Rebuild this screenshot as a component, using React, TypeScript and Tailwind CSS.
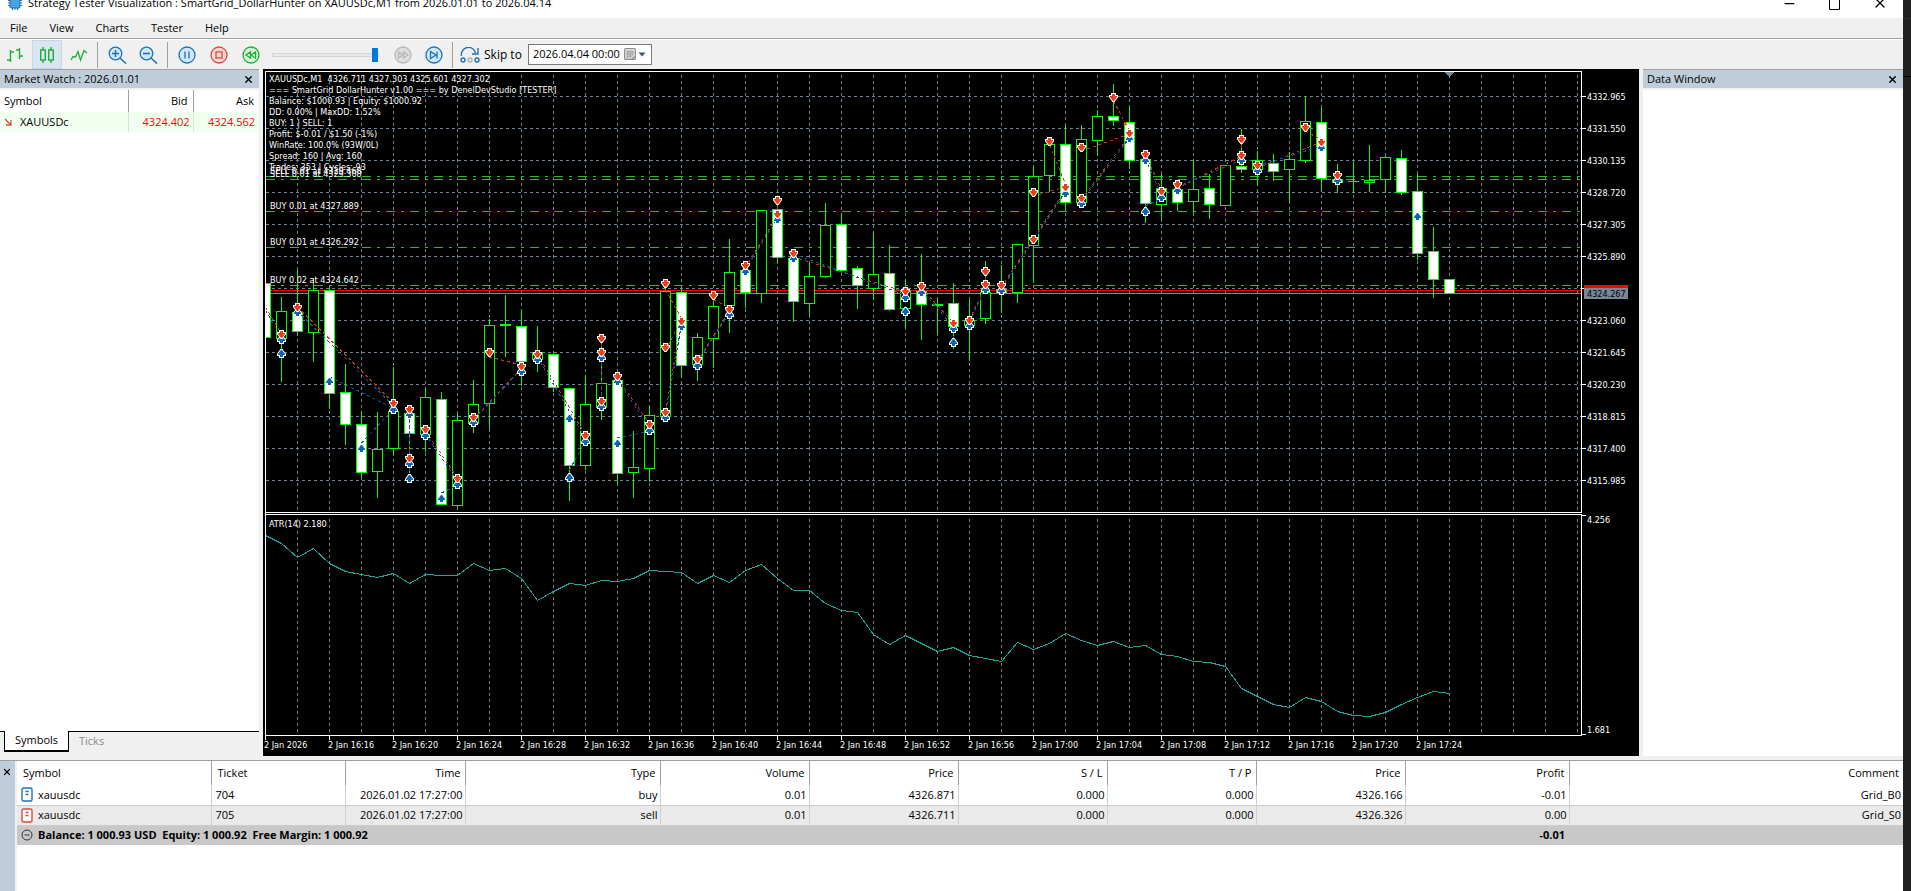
import type { ReactNode } from 'react'
import { X, Minus } from 'lucide-react'

type Candle = [number, number, number, number, 0 | 1]

// high, body top, body bottom, low, filled
const candles: Candle[] = [
  [283, 283, 337, 337, 1], [297, 311, 338, 382, 0], [270, 312, 331, 336, 1], [278, 290, 332, 362, 0],
  [287, 290, 393, 409, 1], [364, 392, 424, 445, 1], [411, 424, 472, 478, 1], [412, 449, 471, 498, 0],
  [367, 411, 448, 455, 0], [405, 413, 433, 473, 1], [388, 397, 434, 452, 0], [392, 399, 504, 504, 1],
  [413, 420, 505, 507, 0], [380, 404, 423, 433, 0], [319, 325, 403, 429, 0], [295, 324, 325, 357, 0],
  [311, 326, 361, 386, 1], [326, 353, 359, 372, 0], [353, 354, 387, 392, 1], [388, 388, 465, 501, 1],
  [375, 404, 465, 470, 0], [337, 383, 407, 420, 0], [378, 380, 473, 484, 1], [431, 467, 472, 498, 0],
  [406, 415, 468, 482, 0], [285, 291, 416, 421, 0], [287, 292, 365, 378, 1], [333, 337, 364, 381, 0],
  [297, 306, 338, 368, 0], [239, 272, 305, 333, 0], [263, 270, 292, 308, 1], [210, 210, 293, 303, 0],
  [200, 209, 257, 263, 1], [258, 258, 301, 322, 1], [263, 276, 303, 315, 0], [203, 225, 276, 278, 0],
  [213, 224, 270, 273, 1], [266, 268, 285, 309, 1], [233, 274, 288, 300, 0], [245, 273, 309, 311, 1],
  [280, 290, 308, 328, 0], [254, 291, 304, 340, 1], [298, 304, 305, 334, 0], [283, 303, 326, 349, 1],
  [300, 320, 325, 361, 0], [261, 292, 318, 324, 0], [265, 289, 292, 313, 0], [244, 244, 292, 303, 0],
  [167, 176, 245, 283, 0], [144, 144, 175, 192, 0], [125, 144, 202, 211, 1], [125, 139, 202, 203, 0],
  [110, 116, 140, 156, 0], [84, 116, 120, 126, 1], [107, 122, 160, 169, 1], [155, 159, 203, 223, 1],
  [174, 188, 204, 219, 0], [183, 189, 202, 211, 1], [160, 189, 201, 213, 0], [174, 188, 204, 219, 1],
  [165, 165, 205, 205, 0], [129, 166, 169, 173, 1], [151, 160, 169, 186, 0], [154, 163, 171, 181, 1],
  [152, 159, 169, 202, 0], [96, 121, 160, 163, 0], [108, 122, 178, 191, 1], [164, 179, 182, 193, 0],
  [162, 181, 181, 193, 0], [145, 180, 182, 192, 0], [156, 157, 179, 193, 0], [150, 158, 192, 195, 1],
  [174, 191, 253, 260, 1], [227, 251, 279, 298, 1], [279, 279, 293, 293, 1],
]

// [bar, y]
const sells = [
  [1, 334], [2, 307], [8, 403], [9, 409], [9, 458], [10, 429], [12, 478], [13, 417], [14, 352], [16, 366],
  [17, 354], [20, 435], [21, 338], [21, 352], [21, 401], [22, 376], [24, 424], [25, 283], [25, 347], [25, 412],
  [26, 321], [27, 359], [28, 295], [29, 309], [30, 265], [32, 200], [32, 214], [33, 253], [40, 291], [41, 286],
  [43, 323], [44, 320], [45, 271], [45, 284], [46, 285], [48, 192], [48, 239], [49, 141], [50, 187], [51, 147],
  [51, 198], [53, 97], [54, 133], [55, 154], [56, 191], [57, 184], [61, 139], [61, 155], [62, 165], [65, 127],
  [66, 142], [67, 175],
]

const buys = [
  [1, 339], [1, 353], [2, 312], [4, 381], [6, 448], [8, 409], [9, 414], [9, 463], [9, 478], [10, 435],
  [11, 498], [12, 484], [13, 422], [16, 371], [17, 359], [19, 418], [19, 477], [20, 441], [21, 357], [21, 406],
  [22, 381], [22, 443], [24, 430], [25, 417], [26, 326], [27, 365], [29, 314], [30, 271], [32, 219], [33, 258],
  [40, 297], [40, 311], [41, 292], [43, 328], [43, 342], [44, 325], [45, 289], [46, 290], [50, 193], [51, 203],
  [54, 138], [55, 160], [55, 211], [56, 197], [57, 190], [61, 160], [62, 170], [66, 147], [67, 180], [72, 216],
]

// [from bar, from y, to bar, to y]
const sellTrades = [
  [0, 307, 1, 334], [2, 307, 8, 403], [9, 413, 9, 458], [10, 431, 12, 478], [13, 419, 16, 368], [14, 357, 16, 365],
  [17, 354, 20, 435], [21, 338, 21, 401], [22, 378, 24, 424], [25, 412, 26, 321], [25, 290, 26, 318], [25, 350, 26, 320],
  [27, 361, 29, 311], [28, 300, 29, 307], [30, 267, 32, 216], [32, 200, 32, 214], [33, 257, 40, 292], [41, 288, 43, 323],
  [44, 320, 45, 286], [45, 271, 45, 284], [46, 287, 50, 190], [48, 196, 50, 187], [49, 145, 50, 184], [51, 151, 54, 134],
  [51, 199, 54, 136], [53, 101, 54, 131], [55, 156, 56, 189], [57, 188, 61, 156], [61, 139, 61, 155], [62, 168, 66, 142],
  [65, 131, 66, 140],
]

const buyTrades = [
  [0, 310, 1, 339], [2, 311, 8, 406], [4, 377, 8, 408], [6, 443, 8, 409], [9, 414, 9, 478], [10, 434, 12, 481],
  [11, 493, 12, 485], [13, 420, 16, 369], [17, 357, 20, 439], [19, 470, 20, 441], [21, 357, 21, 406], [22, 380, 24, 428],
  [22, 438, 24, 431], [25, 416, 26, 325], [27, 362, 29, 313], [30, 269, 32, 218], [33, 254, 40, 295], [41, 290, 43, 327],
  [44, 322, 45, 288], [46, 289, 50, 192], [51, 201, 54, 138], [55, 159, 56, 195], [55, 206, 56, 198], [57, 187, 61, 160],
  [62, 166, 66, 146], [40, 300, 40, 309], [43, 330, 43, 340],
]

const atr = [
  535, 543, 557, 548, 563, 571, 574, 577, 573, 583, 574, 575, 575, 563, 570, 568, 578, 600, 591, 583, 585, 580, 581,
  578, 570, 571, 572, 583, 575, 582, 570, 564, 578, 590, 590, 603, 610, 612, 634, 644, 635, 643, 651, 647, 655, 658,
  661, 642, 649, 643, 633, 640, 645, 641, 647, 645, 654, 656, 661, 662, 666, 688, 696, 704, 707, 697, 701, 711, 715,
  716, 712, 704, 697, 691, 693,
]

const times = [
  '2 Jan 2026', '2 Jan 16:16', '2 Jan 16:20', '2 Jan 16:24', '2 Jan 16:28', '2 Jan 16:32', '2 Jan 16:36',
  '2 Jan 16:40', '2 Jan 16:44', '2 Jan 16:48', '2 Jan 16:52', '2 Jan 16:56', '2 Jan 17:00', '2 Jan 17:04',
  '2 Jan 17:08', '2 Jan 17:12', '2 Jan 17:16', '2 Jan 17:20', '2 Jan 17:24',
]

const prices = [
  '4332.965', '4331.550', '4330.135', '4328.720', '4327.305', '4325.890', '', '4323.060', '4321.645', '4320.230',
  '4318.815', '4317.400', '4315.985',
]

const info = [
  'XAUUSDc,M1\u00a0 4326.711 4327.303 4325.601 4327.302',
  '=== SmartGrid DollarHunter v1.00 === by DenelDevStudio [TESTER]',
  'Balance: $1000.93 | Equity: $1000.92',
  'DD: 0.00% | MaxDD: 1.52%',
  'BUY: 1 | SELL: 1',
  'Profit: $-0.01 / $1.50 (-1%)',
  'WinRate: 100.0% (93W/0L)',
  'Spread: 160 | Avg: 160',
  'Trades: 353 | Cycles: 93',
]

const orders = [
  { y: 176, label: 'SELL 0.01 at 4329.468' },
  { y: 179, label: 'SELL 0.01 at 4329.308' },
  { y: 211, label: 'BUY 0.01 at 4327.889' },
  { y: 247, label: 'BUY 0.01 at 4326.292' },
  { y: 285, label: 'BUY 0.02 at 4324.642' },
]

const barX = (i: number) => 265 + i * 16

function Chart() {
  return (
    <svg
      viewBox="263 69 1376 687"
      className="block w-full bg-black font-['DejaVu_Sans_Condensed','DejaVu_Sans',sans-serif] text-[9px]"
      shapeRendering="crispEdges"
      role="img"
      aria-label="XAUUSDc,M1 chart"
    >
      {/* grid */}
      <g stroke="#708294" strokeDasharray="3 3">
        {Array.from({ length: 41 }, (_, i) => (
          <path key={i} d={`M${297.5 + i * 32} 75V512M${297.5 + i * 32} 519V735`} />
        ))}
        {prices.map((_, i) => (
          <path key={i} d={`M266 ${96.5 + i * 32}H1581`} />
        ))}
      </g>

      <g stroke="#32cd32" strokeDasharray="9 6 3 6">
        {orders.map((o) => (
          <path key={o.y} d={`M266 ${o.y + 0.5}H1581`} opacity="0.9" />
        ))}
      </g>

      {/* ask and bid */}
      <path d="M266 290.5H1581" stroke="#ff0000" />
      <path d="M266 293.5H1581" stroke="#778899" />

      {candles.map(([high, top, bottom, low, filled], i) => {
        const x = barX(i)
        const left = i === 0 ? x + 0.5 : x - 4.5
        return (
          <g key={i} stroke="#00ff00">
            {high < top && <path d={`M${x + 0.5} ${high}V${top}`} />}
            {low > bottom && <path d={`M${x + 0.5} ${bottom}V${low}`} />}
            <rect
              x={left}
              y={top + 0.5}
              width={i === 0 ? 5 : 10}
              height={Math.max(bottom - top, 0.01)}
              fill={filled ? '#fff' : '#000'}
            />
          </g>
        )
      })}

      <g strokeDasharray="3 3">
        {sellTrades.map(([a, y1, b, y2], i) => (
          <path key={i} d={`M${barX(a) + 0.5} ${y1}L${barX(b) + 0.5} ${y2}`} stroke="#c03818" />
        ))}
        {buyTrades.map(([a, y1, b, y2], i) => (
          <path key={i} d={`M${barX(a) + 0.5} ${y1}L${barX(b) + 0.5} ${y2}`} stroke="#0a5aa0" />
        ))}
      </g>

      <g stroke="#fff" strokeWidth="2" paintOrder="stroke" shapeRendering="geometricPrecision">
        {buys.map(([i, y]) => (
          <path
            key={`${i}-${y}`}
            transform={`translate(${barX(i) + 0.5} ${y + 0.5})`}
            d="M-1.5 3.5V1.5H-3.5V.5L-.5 -3.5H.5L3.5 .5V1.5H1.5V3.5Z"
            fill="#0a64b4"
          />
        ))}
        {sells.map(([i, y]) => (
          <path
            key={`${i}-${y}`}
            transform={`translate(${barX(i) + 0.5} ${y + 0.5})`}
            d="M-1.5 -3.5V-1.5H-3.5V-.5L-.5 3.5H.5L3.5 -.5V-1.5H1.5V-3.5Z"
            fill="#e8401c"
          />
        ))}
      </g>

      <polyline
        points={atr.map((y, i) => `${barX(i) + 0.5},${y + 0.5}`).join(' ')}
        fill="none"
        stroke="#20a59b"
      />

      {/* pane frames and axis ticks */}
      <path d="M265.5 740V71.5H1581.5V512.5H265.5M265.5 514.5H1581.5V735.5H265.5" fill="none" stroke="#fff" />
      <g stroke="#fff">
        {prices.map((_, i) => (
          <path key={i} d={`M1582 ${96.5 + i * 32}H1586`} />
        ))}
        <path d="M1582 515.5H1586M1582 734.5H1586" />
        {times.map((t, i) => (
          <path key={t} d={`M${265.5 + i * 64} 736V740`} />
        ))}
      </g>
      <path d="M1444 72H1455L1449.5 77Z" fill="#778899" />

      <g fill="#fff">
        {info.map((line, i) => (
          <text key={line} x="269" y={82 + i * 11}>{line}</text>
        ))}
        {orders.map((o) => (
          <text key={o.y} x="270" y={o.y - 2}>{o.label}</text>
        ))}
        <text x="269" y="527">ATR(14) 2.180</text>
        {prices.map((p, i) => (
          <text key={i} x="1587" y={100 + i * 32}>{p}</text>
        ))}
        <text x="1587" y="523">4.256</text>
        <text x="1587" y="733">1.681</text>
        {times.map((t, i) => (
          <text key={t} x={264 + i * 64} y="748">{t}</text>
        ))}
      </g>
      <rect x="1584" y="285" width="44" height="4" fill="#ff0000" />
      <rect x="1584" y="288" width="44" height="11" fill="#778899" />
      <text x="1587" y="297" fill="#000">4324.267</text>
    </svg>
  )
}

function ToolButton({ label, active, children }: { label: string; active?: boolean; children: ReactNode }) {
  return (
    <button
      type="button"
      aria-label={label}
      className={`flex h-[27px] w-7 shrink-0 items-center justify-center ${active ? 'bg-[#d9e6f2] outline outline-1 outline-[#c4d6e8]' : ''}`}
    >
      {children}
    </button>
  )
}

function RoundIcon({ stroke, fill, children }: { stroke: string; fill: string; children: ReactNode }) {
  return (
    <svg width="18" height="18" viewBox="0 0 18 18" fill="none" stroke={stroke} strokeWidth="1.3">
      <circle cx="9" cy="9" r="8" fill={fill} />
      {children}
    </svg>
  )
}

function Magnifier({ plus }: { plus?: boolean }) {
  return (
    <svg width="19" height="18" viewBox="0 0 19 18" fill="none" stroke="#1e73b4" strokeWidth="1.3">
      <circle cx="7.5" cy="7.5" r="6.3" fill="#cfe8fb" />
      <path d="M12 12L18 17.5" strokeWidth="1.6" />
      <path d={plus ? 'M4 7.5H11M7.5 4V11' : 'M4 7.5H11'} strokeWidth="1.6" />
    </svg>
  )
}

function Divider() {
  return <div className="h-[26px] w-px shrink-0 bg-[#a0a0a0]" />
}

function Toolbar() {
  return (
    <div className="flex h-[30px] items-center border-t border-white bg-[#f0f0f0]">
      <div className="flex w-[97px] items-center justify-between pl-px pr-1">
        <ToolButton label="Bar chart">
          <svg width="18" height="18" viewBox="0 0 18 18" fill="none" stroke="#1fae3a" strokeWidth="1.4">
            <path d="M4.5 4V16M1 14H4.5M4.5 6H8M13.5 2V13M10 4H13.5M13.5 10H17" />
          </svg>
        </ToolButton>
        <ToolButton label="Candlesticks" active>
          <svg width="16" height="18" viewBox="0 0 16 18" fill="none" stroke="#1fae3a" strokeWidth="1.4">
            <path d="M4 1V4M4 14V17M12 1V4M12 14V17" />
            <rect x="1.7" y="4" width="4.6" height="10" />
            <rect x="9.7" y="4" width="4.6" height="10" />
          </svg>
        </ToolButton>
        <ToolButton label="Line chart">
          <svg width="18" height="14" viewBox="0 0 18 14" fill="none" stroke="#1fae3a" strokeWidth="1.3">
            <path d="M1 12L3 8.5L5.5 9L8 3.5L10.5 12L14 2.5L17 5" />
          </svg>
        </ToolButton>
      </div>
      <Divider />
      <div className="flex w-[69px] items-center justify-between px-[5px]">
        <ToolButton label="Zoom in"><Magnifier plus /></ToolButton>
        <ToolButton label="Zoom out"><Magnifier /></ToolButton>
      </div>
      <Divider />
      <div className="flex w-[104px] items-center justify-between pl-[5px] pr-[7px]">
        <ToolButton label="Pause">
          <RoundIcon stroke="#1e73b4" fill="#cfe8fb"><path d="M7 5.5V12.5M11 5.5V12.5" /></RoundIcon>
        </ToolButton>
        <ToolButton label="Stop">
          <RoundIcon stroke="#dc4a40" fill="#fbd9d3"><rect x="6" y="6" width="6" height="6" /></RoundIcon>
        </ToolButton>
        <ToolButton label="Slower">
          <RoundIcon stroke="#1fae3a" fill="#d5f7d3"><path d="M8.5 6V12L4 9ZM13.5 6V12L9 9Z" /></RoundIcon>
        </ToolButton>
      </div>
      <input
        type="range"
        aria-label="Speed"
        min={0}
        max={100}
        defaultValue={100}
        className="h-4 w-[107px] appearance-none bg-transparent [&::-webkit-slider-runnable-track]:h-1 [&::-webkit-slider-runnable-track]:border [&::-webkit-slider-runnable-track]:border-[#d6d6d6] [&::-webkit-slider-runnable-track]:bg-[#e7eaea] [&::-webkit-slider-thumb]:-mt-[6px] [&::-webkit-slider-thumb]:h-[14px] [&::-webkit-slider-thumb]:w-[6px] [&::-webkit-slider-thumb]:appearance-none [&::-webkit-slider-thumb]:bg-[#0078d7]"
      />
      <div className="flex w-[73px] items-center justify-between pl-[10px] pr-1">
        <ToolButton label="Faster">
          <RoundIcon stroke="#b8b8b8" fill="#dedede"><path d="M4.5 6V12L9 9ZM9.5 6V12L14 9Z" /></RoundIcon>
        </ToolButton>
        <ToolButton label="Step">
          <RoundIcon stroke="#1e73b4" fill="#cfe8fb"><path d="M5.5 5.5V12.5L11 9ZM12 5.5V12.5" /></RoundIcon>
        </ToolButton>
      </div>
      <Divider />
      <label htmlFor="skip-to" className="flex items-center gap-1 pl-[7px] text-[12px]">
        <svg width="20" height="16" viewBox="0 0 20 16" fill="none" stroke="#1e73b4" strokeWidth="1.4">
          <path d="M1.5 9A7 7 0 0 1 15.5 6" />
          <path d="M18 1V7H12" />
          <circle cx="3" cy="13" r="2" />
          <circle cx="10" cy="13" r="2" stroke="#b0b0b0" />
          <circle cx="17" cy="13" r="2" />
        </svg>
        Skip to
      </label>
      <div className="ml-[6px] flex h-[21px] w-[124px] items-center border border-[#7a7a7a] bg-white pl-1 pr-[5px]">
        <input
          id="skip-to"
          type="text"
          defaultValue="2026.04.04 00:00"
          className="w-0 min-w-0 flex-1 bg-transparent text-[11px] outline-none"
        />
        <button type="button" aria-label="Open calendar" className="flex items-center gap-[2px]">
          <svg width="12" height="13" viewBox="0 0 11 12" fill="none" stroke="#8a8a8a">
            <rect x="0.5" y="0.5" width="10" height="10" rx="1" fill="#dcdcdc" />
            <path d="M2 3.5H9M2 5.5H9M2 7.5H7M3.5 2.5V9M5.5 2.5V9M7.5 2.5V8" stroke="#8a8a8a" strokeWidth="0.6" />
            <path d="M7 10.5L10.5 7.5" />
          </svg>
          <svg width="8" height="5" viewBox="0 0 8 5"><path d="M0.5 .5H7.5L4 4.5Z" fill="#44546a" /></svg>
        </button>
      </div>
    </div>
  )
}

function PanelHeader({ title }: { title: string }) {
  return (
    <div className="flex h-[19px] items-center justify-between border-t border-[#a0a0a0] bg-[#bfcddb] pl-1 pr-[5px] text-[11px]">
      <h2>{title}</h2>
      <button type="button" aria-label={`Close ${title}`}><X size={11} strokeWidth={3} /></button>
    </div>
  )
}

function MarketWatch() {
  return (
    <section className="flex w-[259px] shrink-0 flex-col">
      <PanelHeader title="Market Watch : 2026.01.01" />
      <div className="mt-[2px] flex-1 bg-white">
        <table className="w-full table-fixed text-[11px]">
          <colgroup>
            <col />
            <col className="w-[65px]" />
            <col className="w-[66px]" />
          </colgroup>
          <thead>
            <tr className="h-[22px]">
              <th className="pl-1 text-left font-normal">Symbol</th>
              <th className="border-x border-[#a0a0a0] pr-[5px] text-right font-normal">Bid</th>
              <th className="pr-[5px] text-right font-normal">Ask</th>
            </tr>
          </thead>
          <tbody>
            <tr className="h-5 bg-[#f0fff0]">
              <td>
                <span className="flex items-center gap-2 pl-1">
                  <svg width="8" height="8" viewBox="0 0 8 8" fill="none" stroke="#dc4a40" strokeWidth="1.3">
                    <path d="M1 1L7 7M7 2V7H2" />
                  </svg>
                  XAUUSDc
                </span>
              </td>
              <td className="border-x border-[#d8e4d8] pr-[3px] text-right text-[#ff0000]">4324.402</td>
              <td className="pr-1 text-right text-[#ff0000]">4324.562</td>
            </tr>
          </tbody>
        </table>
      </div>
      <div className="flex h-[25px] items-start text-[11px]">
        <div className="h-px w-1 bg-black" />
        <button type="button" className="h-[21px] w-[65px] border-x border-b-2 border-black bg-white">Symbols</button>
        <button type="button" className="h-5 flex-1 border-t border-black pl-[10px] text-left text-[#8a8a8a]">Ticks</button>
      </div>
    </section>
  )
}

const columns = ['Symbol', 'Ticket', 'Time', 'Type', 'Volume', 'Price', 'S / L', 'T / P', 'Price', 'Profit', 'Comment']

const trades = [
  { color: '#1e73b4', cells: ['xauusdc', '704', '2026.01.02 17:27:00', 'buy', '0.01', '4326.871', '0.000', '0.000', '4326.166', '-0.01', 'Grid_B0'] },
  { color: '#dc4a40', cells: ['xauusdc', '705', '2026.01.02 17:27:00', 'sell', '0.01', '4326.711', '0.000', '0.000', '4326.326', '0.00', 'Grid_S0'] },
]

function TradeTable() {
  return (
    <section className="flex flex-1 border-t border-[#a0a0a0]">
      <div className="w-[15px] shrink-0 bg-[#bfcddb] pt-[6px]">
        <button type="button" aria-label="Close toolbox" className="block pl-[2px]"><X size={10} strokeWidth={3} /></button>
      </div>
      <div className="ml-[2px] flex-1 bg-white">
        <table className="w-full table-fixed text-[11px]">
          <colgroup>
            <col className="w-[194px]" />
            <col className="w-[134px]" />
            <col className="w-[120px]" />
            <col className="w-[195px]" />
            <col className="w-[149px]" />
            <col className="w-[149px]" />
            <col className="w-[149px]" />
            <col className="w-[149px]" />
            <col className="w-[149px]" />
            <col className="w-[164px]" />
            <col />
          </colgroup>
          <thead>
            <tr className="h-6">
              {columns.map((c, i) => (
                <th
                  key={i}
                  className={`border-r border-[#a0a0a0] font-normal last:border-r-0 ${i < 2 ? 'px-[6px] text-left' : 'px-1 text-right'}`}
                >
                  {c}
                </th>
              ))}
            </tr>
          </thead>
          <tbody>
            {trades.map((t) => (
              <tr key={t.cells[1]} className="h-5 border-b border-[#cccccc] even:bg-[#eaeaea]">
                {t.cells.map((cell, i) => (
                  <td
                    key={i}
                    className={`border-r border-[#d0d0d0] last:border-r-0 ${i < 2 ? 'px-1 text-left' : 'px-[2px] text-right'}`}
                  >
                    {i === 0 ? (
                      <span className="flex items-center gap-[5px]">
                        <svg width="12" height="15" viewBox="0 0 12 15" fill="#fff" stroke={t.color} strokeWidth="1.4">
                          <rect x="1" y="1" width="10" height="13" rx="1.5" />
                          <path d="M4.5 4.5H7.5M4.5 7.5H7.5" />
                        </svg>
                        {cell}
                      </span>
                    ) : (
                      cell
                    )}
                  </td>
                ))}
              </tr>
            ))}
          </tbody>
          <tfoot>
            <tr className="h-5 bg-[#c8c8c8] font-bold">
              <td colSpan={9} className="px-1">
                <span className="flex items-center gap-[5px]">
                  <svg width="12" height="12" viewBox="0 0 12 12" fill="none" stroke="#333">
                    <circle cx="6" cy="6" r="5" />
                    <path d="M3.5 6H8.5" />
                  </svg>
                  <span>Balance: 1 000.93 USD&nbsp; Equity: 1 000.92&nbsp; Free Margin: 1 000.92</span>
                </span>
              </td>
              <td className="px-1 text-right">-0.01</td>
              <td />
            </tr>
          </tfoot>
        </table>
      </div>
    </section>
  )
}

const menu = ['File', 'View', 'Charts', 'Tester', 'Help']

export default function App() {
  return (
    <div className="flex h-screen overflow-hidden bg-[#202020] font-['Open_Sans','Noto_Sans',sans-serif] text-black">
      <main className="flex min-w-0 flex-1 flex-col bg-[#f0f0f0]">
        <header className="flex h-[18px] shrink-0 items-end overflow-hidden bg-white pb-[7px]">
          <div className="flex flex-1 items-center gap-[6px] pl-2">
            <svg width="14" height="14" viewBox="0 0 14 14" fill="none" stroke="#1e73b4">
              <path d="M4.5 0V14M7 0V14M9.5 0V14M0 4.5H14M0 7H14M0 9.5H14" />
              <rect x="2" y="2" width="10" height="10" rx="1" fill="#4aa3e0" />
            </svg>
            <h1 className="text-[11px] leading-4">
              Strategy Tester Visualization : SmartGrid_DollarHunter on XAUUSDc,M1 from 2026.01.01 to 2026.04.14
            </h1>
          </div>
          <div className="flex items-center gap-[32px] pr-[15px]">
            <button type="button" aria-label="Minimize"><Minus size={15} strokeWidth={2} /></button>
            <button type="button" aria-label="Maximize">
              <svg width="11" height="14" viewBox="0 0 11 14" fill="none" stroke="#000"><path d="M.5 3.5H10.5V13.5H.5Z" /></svg>
            </button>
            <button type="button" aria-label="Close"><X size={16} strokeWidth={2} /></button>
          </div>
        </header>
        <nav className="flex h-[21px] shrink-0 items-center gap-[22px] border-b border-[#a0a0a0] pl-[10px] text-[11px]">
          {menu.map((m) => (
            <button key={m} type="button">{m}</button>
          ))}
        </nav>
        <Toolbar />
        <div className="flex">
          <MarketWatch />
          <div className="mx-1 min-w-0 flex-1">
            <Chart />
          </div>
          <section className="flex w-[260px] shrink-0 flex-col">
            <PanelHeader title="Data Window" />
            <div className="mt-[2px] flex-1 bg-white" />
          </section>
        </div>
        <div className="h-1 shrink-0" />
        <TradeTable />
      </main>
      <aside className="w-2 shrink-0 bg-[#202020]">
        <div className="h-[77px] border-b border-black pt-[18px]">
          <div className="h-px bg-[#2e2e2e]" />
        </div>
      </aside>
    </div>
  )
}
